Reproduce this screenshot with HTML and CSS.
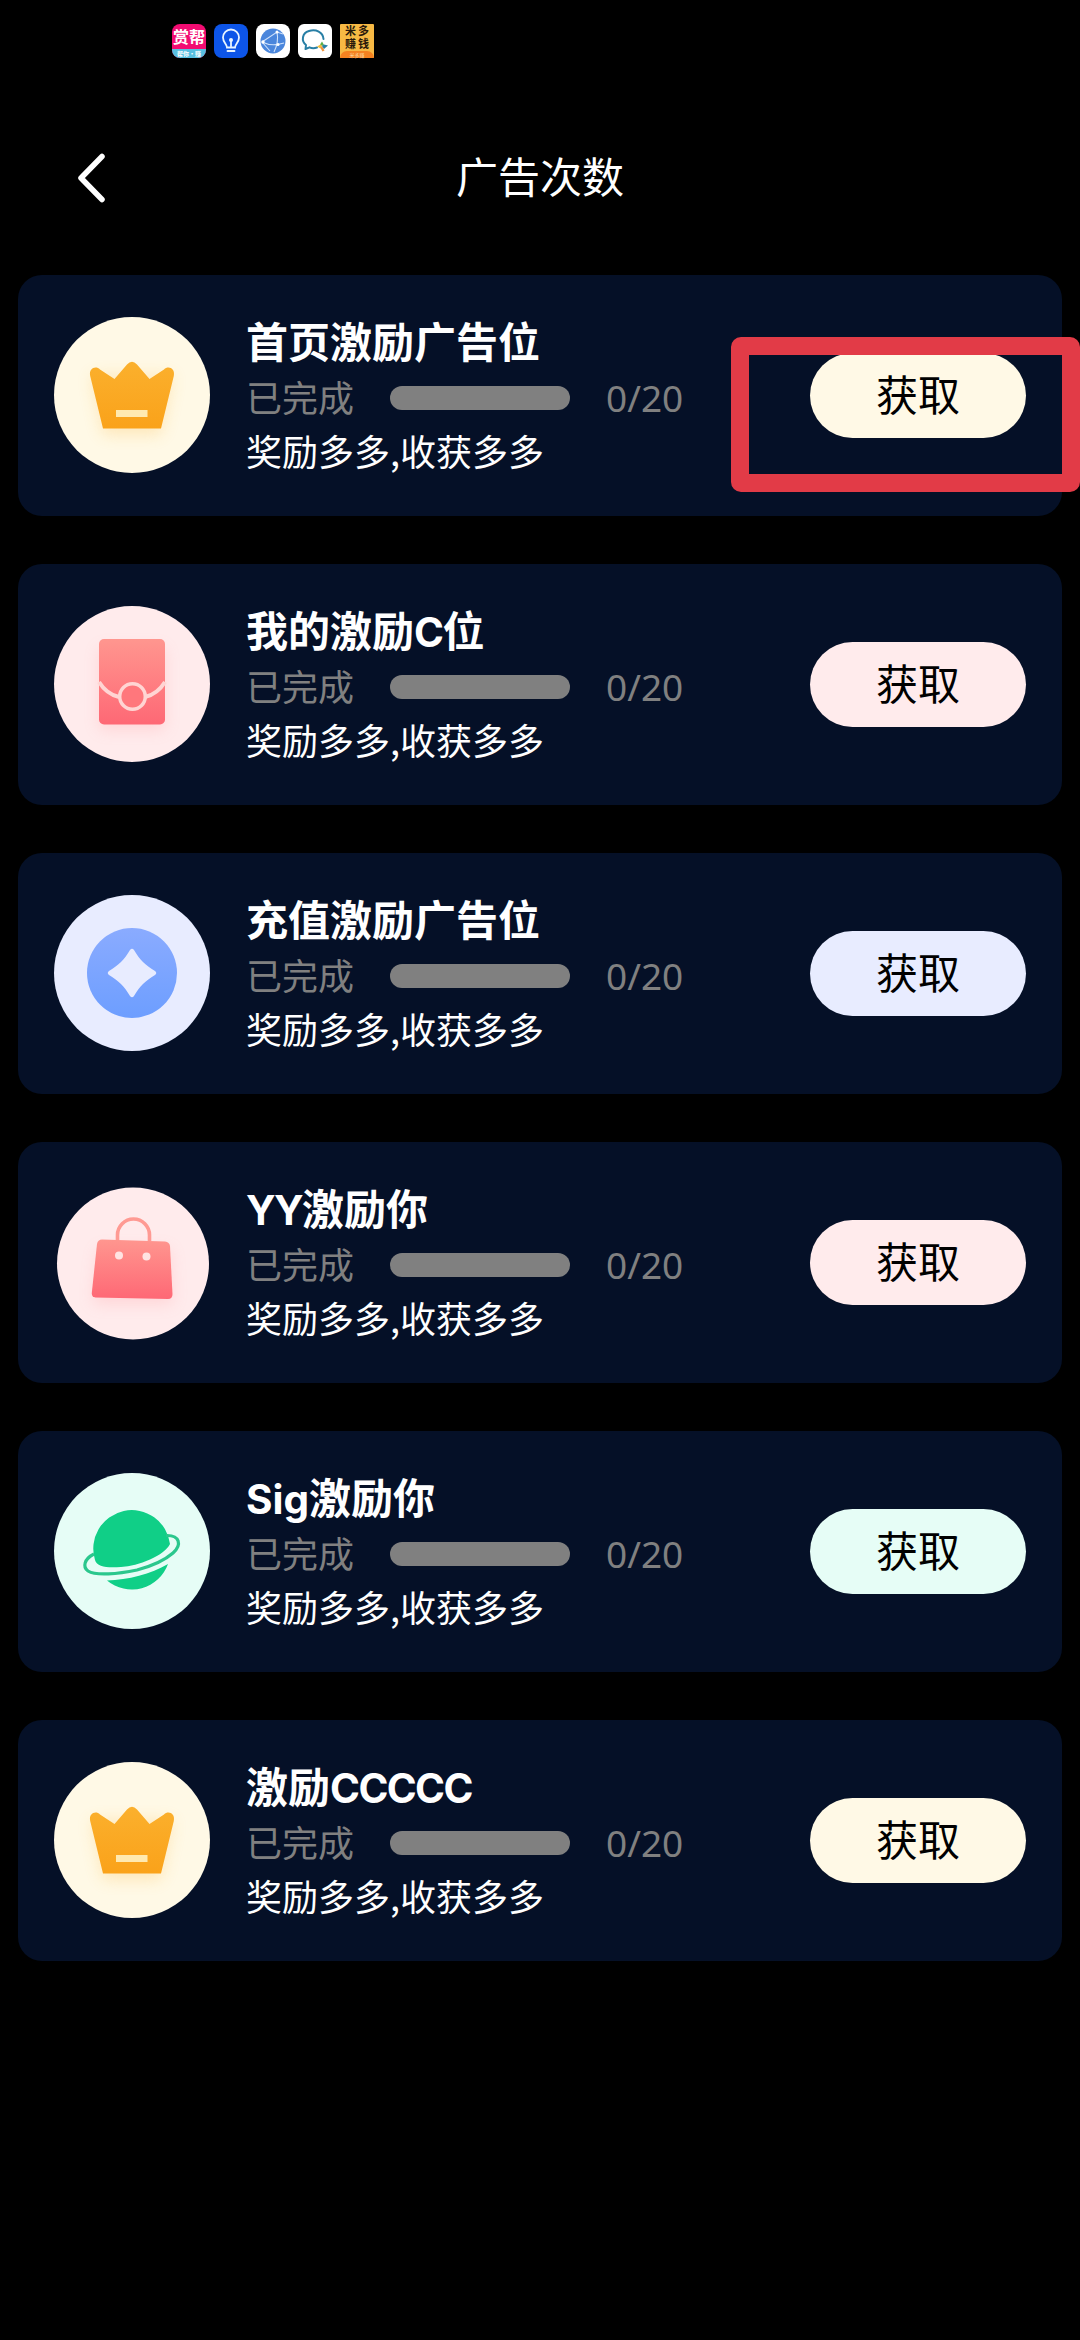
FILE: index.html
```html
<!DOCTYPE html>
<html lang="zh-CN">
<head>
<meta charset="utf-8">
<title>广告次数</title>
<link rel="stylesheet" href="styles.css">
</head>
<body>
<svg class="defs" width="0" height="0" aria-hidden="true">
  <defs>
    <linearGradient id="gold" x1="0" y1="0" x2="0" y2="1"><stop offset="0" stop-color="#fbb02d"/><stop offset="1" stop-color="#faa21a"/></linearGradient>
    <linearGradient id="coral" x1="0" y1="0" x2="0" y2="1"><stop offset="0" stop-color="#ff968f"/><stop offset="1" stop-color="#fe6875"/></linearGradient>
    <linearGradient id="blue" x1="0" y1="0" x2="0" y2="1"><stop offset="0" stop-color="#8aabff"/><stop offset="1" stop-color="#6d9eff"/></linearGradient>
    <filter id="soft" x="-50%" y="-50%" width="200%" height="200%"><feGaussianBlur stdDeviation="8"/></filter>
    <symbol id="crown" viewBox="0 0 156 156">
      <circle cx="78" cy="78" r="78" fill="#fff9e6"/>
      <path d="M37 58L49 118H107L119 58Z" fill="#fbb02d" opacity=".24" filter="url(#soft)"/>
      <path d="M36.200 59C34.500 51 42 48.500 46 52.500L60.500 62L73 47.500Q78 42 83 47.500L95.500 62L110 52.500C114 48.500 121.500 51 119.800 59L107 111.500H49Z" fill="url(#gold)"/>
      <rect x="62" y="93" width="31.500" height="7" fill="#ffe9b0"/>
    </symbol>
    <symbol id="packet" viewBox="0 0 156 156">
      <circle cx="78" cy="78" r="78" fill="#ffebec"/>
      <rect x="45" y="42" width="66" height="82" rx="4" fill="#ff7d82" opacity=".2" filter="url(#soft)"/>
      <rect x="45" y="33" width="66" height="85.500" rx="5" fill="url(#coral)"/>
      <path d="M45 76C50 84 56 89 65 91M111 76C106 84 100 89 91 91" fill="none" stroke="#ffd5d3" stroke-width="4"/>
      <circle cx="78.500" cy="90.500" r="12.800" fill="#ff777c" stroke="#ffd5d3" stroke-width="3.500"/>
    </symbol>
    <symbol id="diamond" viewBox="0 0 156 156">
      <circle cx="78" cy="78" r="78" fill="#e8ecff"/>
      <circle cx="78" cy="78" r="45" fill="url(#blue)"/>
      <path d="M76 55Q78 52.500 80 55C86 65 91 70 101 76Q103.500 78 101 80C91 86 86 91 80 101Q78 103.500 76 101C70 91 65 86 55 80Q52.500 78 55 76C65 70 70 65 76 55Z" fill="#e8ecff"/>
    </symbol>
    <symbol id="bag" viewBox="0 0 156 156">
      <circle cx="79" cy="79.500" r="76" fill="#ffebec"/>
      <path d="M44 65H116L119 120H39Z" fill="#ff7d82" opacity=".2" filter="url(#soft)"/>
      <path d="M63.500 57V51A16 16 0 0 1 95.500 51V57" fill="none" stroke="#ff9a93" stroke-width="3.600"/>
      <path d="M48 55.500L111 57.500Q115.500 58 116 62L118.500 110Q118.500 115 114 115L41.500 113.500Q37.500 113 37.800 109L43 60Q43.800 55.500 48 55.500Z" fill="url(#coral)"/>
      <circle cx="65" cy="71.500" r="4" fill="#ffe3e2"/><circle cx="92.500" cy="72.500" r="4" fill="#ffe3e2"/>
    </symbol>
    <symbol id="planet" viewBox="0 0 156 156">
      <circle cx="78" cy="78" r="78" fill="#e6fdf6"/>
      <path d="M41 87A38.500 38.500 0 1 1 116 71C113 77 106 82 96 86.500C86 91 76 93.500 67 94C53 95 43 94 41 87Z" fill="#10cf87"/>
      <path d="M53 107.500C74 107 97 101 114 91A38.500 38.500 0 0 1 53 107.500Z" fill="#10cf87"/>
      <path d="M40 81C30 86 28.500 94 34 98C42 103 64 101 83 97C98 93 111 87 119 80C128 72 126 62 112 62.500" fill="none" stroke="#2bc78d" stroke-width="3.200"/>
    </symbol>
  </defs>
</svg>

<div class="statusbar">
  <div class="app app-reward"><span class="app-name">赏帮</span><span class="app-strip">帮你·赚</span></div>
  <svg class="app" viewBox="0 0 34 34"><rect width="34" height="34" rx="8" fill="#0d55e8"/><path d="M13 23.500C13 20 9 18.500 9 13.500A8 8 0 0 1 25 13.500C25 18.500 21 20 21 23.500ZM13.500 27H20.500M17 22V16" fill="none" stroke="#e8f4ff" stroke-width="1.800" stroke-linecap="round"/><circle cx="17" cy="16" r="2" fill="#e8f4ff"/></svg>
  <svg class="app" viewBox="0 0 34 34"><rect width="34" height="34" rx="8" fill="#fff"/><circle cx="17" cy="17" r="12.500" fill="#4a86dc"/><path d="M6 18L21 8L27 10M21 8Q23 18 18 28M6 18Q16 23 28 19M6 18L14 27" fill="none" stroke="#cfe2fb" stroke-width="1.100"/><circle cx="21" cy="8" r="1.500" fill="#fff"/><circle cx="7" cy="18" r="1.700" fill="#fff"/><circle cx="22" cy="20.500" r="1.500" fill="#fff"/></svg>
  <svg class="app" viewBox="0 0 34 34"><rect width="34" height="34" rx="6" fill="#fff"/><path d="M19 23.500C16 24.500 13.500 24.200 11.500 23.300L7.500 25L8 21C3 17 4 9 11 7C18 5 25 8 25.500 15" fill="none" stroke="#287fa5" stroke-width="2" stroke-linecap="round" stroke-linejoin="round"/><path d="M24 17.500L26 21L24 22L22 20.500Z" fill="#5aae4b"/><path d="M19 22.500L22.500 20.500L24 22L22.500 24.500Z" fill="#f4bd38"/><path d="M22.500 24L24 22L26.500 26.500L24.500 27.500Z" fill="#f1923c"/><path d="M24 22L26 20.500L30 21.500L26 25Z" fill="#287fa5"/></svg>
  <div class="app app-earn"><span class="earn-name">米多<br>赚钱</span><span class="earn-strip">米多赚</span></div>
</div>

<header class="navbar">
  <button class="back" aria-label="返回"><svg width="36" height="54" viewBox="0 0 36 54"><path d="M30 5.500L9 27L30 48.500" fill="none" stroke="#fff" stroke-width="5.500" stroke-linecap="round" stroke-linejoin="round"/></svg></button>
  <h1 class="page-title">广告次数</h1>
</header>

<main class="list">
  <section class="card">
    <svg class="badge"><use href="#crown"/></svg>
    <div class="info"><h2 class="name">首页激励广告位</h2><div class="progress"><span class="label">已完成</span><span class="bar"></span><span class="count">0/20</span></div><p class="desc">奖励多多,收获多多</p></div>
    <button class="get cream">获取</button>
    <div class="highlight"></div>
  </section>
  <section class="card">
    <svg class="badge"><use href="#packet"/></svg>
    <div class="info"><h2 class="name">我的激励<span class="latin">C</span>位</h2><div class="progress"><span class="label">已完成</span><span class="bar"></span><span class="count">0/20</span></div><p class="desc">奖励多多,收获多多</p></div>
    <button class="get pink">获取</button>
  </section>
  <section class="card">
    <svg class="badge"><use href="#diamond"/></svg>
    <div class="info"><h2 class="name">充值激励广告位</h2><div class="progress"><span class="label">已完成</span><span class="bar"></span><span class="count">0/20</span></div><p class="desc">奖励多多,收获多多</p></div>
    <button class="get lilac">获取</button>
  </section>
  <section class="card">
    <svg class="badge"><use href="#bag"/></svg>
    <div class="info"><h2 class="name"><span class="latin">YY</span>激励你</h2><div class="progress"><span class="label">已完成</span><span class="bar"></span><span class="count">0/20</span></div><p class="desc">奖励多多,收获多多</p></div>
    <button class="get pink">获取</button>
  </section>
  <section class="card">
    <svg class="badge"><use href="#planet"/></svg>
    <div class="info"><h2 class="name"><span class="latin mixed">Sig</span>激励你</h2><div class="progress"><span class="label">已完成</span><span class="bar"></span><span class="count">0/20</span></div><p class="desc">奖励多多,收获多多</p></div>
    <button class="get mint">获取</button>
  </section>
  <section class="card">
    <svg class="badge"><use href="#crown"/></svg>
    <div class="info"><h2 class="name">激励<span class="latin">CCCCC</span></h2><div class="progress"><span class="label">已完成</span><span class="bar"></span><span class="count">0/20</span></div><p class="desc">奖励多多,收获多多</p></div>
    <button class="get cream">获取</button>
  </section>
</main>
</body>
</html>
```

FILE: styles.css
```css
* { box-sizing: border-box; margin: 0; padding: 0; }
body {
  width: 1080px;
  min-height: 2340px;
  background: #000;
  color: #fff;
  font-family: "Noto Sans CJK SC", sans-serif;
  overflow-x: hidden;
}
button { border: 0; background: none; font: inherit; }
.defs { position: absolute; }

.statusbar { display: flex; gap: 8px; height: 80px; padding: 24px 0 0 172px; }
.app { display: flex; flex-direction: column; width: 34px; height: 34px; text-align: center; white-space: nowrap; }
.app-reward { border-radius: 8px; background: #f20c72; }
.app-name { height: 25px; font-size: 16px; font-weight: 700; line-height: 24px; }
.app-strip { height: 9px; border-radius: 0 0 8px 8px; background: #58bfe0; font-size: 6px; font-weight: 700; line-height: 9px; }
.app-earn { background: #f7b944; color: #28180a; border-radius: 1px; }
.earn-name { height: 27px; font-size: 11px; font-weight: 700; line-height: 13px; letter-spacing: 2px; padding-left: 2px; }
.earn-strip { height: 7px; border-radius: 8px 8px 0 0; background: #f58220; color: #ffd9a0; font-size: 5px; line-height: 7px; }

.navbar { display: grid; grid-template-columns: 180px 1fr 180px; align-items: center; height: 195px; }
.back { display: flex; padding-left: 72px; }
.page-title { padding-bottom: 5px; font-size: 42px; font-weight: 400; line-height: 60px; text-align: center; }

.list { display: flex; flex-direction: column; gap: 48px; padding: 0 18px; }
.card { position: relative; display: flex; align-items: center; height: 241px; padding: 0 36px; border-radius: 24px; background: #051027; }
.badge { flex: none; width: 156px; height: 156px; margin-bottom: 2px; }
.info { flex: 1; padding: 0 0 6px 36px; }
.name { height: 60px; font-size: 42px; font-weight: 700; line-height: 59px; }
.latin { font-family: Inter, "Noto Sans CJK SC", sans-serif; font-size: 40.5px; line-height: 1; letter-spacing: -1.6px; }
.mixed { letter-spacing: 0; }
.progress { display: flex; align-items: center; gap: 36px; height: 54px; padding-top: 3px; color: #808080; font-size: 36px; line-height: 51px; }
.label { width: 108px; padding-bottom: 3px; }
.bar { width: 180px; height: 24px; border-radius: 12px; background: #808080; }
.count { padding-bottom: 1px; font-family: "Noto Sans", sans-serif; font-size: 37px; }
.desc { font-size: 36px; line-height: 52px; }
.get { flex: none; width: 216px; height: 85px; padding-bottom: 5px; border-radius: 43px; color: #000; font-size: 42px; line-height: 80px; text-align: center; }
.cream { background: #fff9e6; }
.pink { background: #ffebec; }
.lilac { background: #e8ecff; }
.mint { background: #e6fdf6; }
.highlight { position: absolute; top: 62px; left: 713px; width: 349px; height: 155px; border: 18px solid #e23b47; border-radius: 10px; }
```
